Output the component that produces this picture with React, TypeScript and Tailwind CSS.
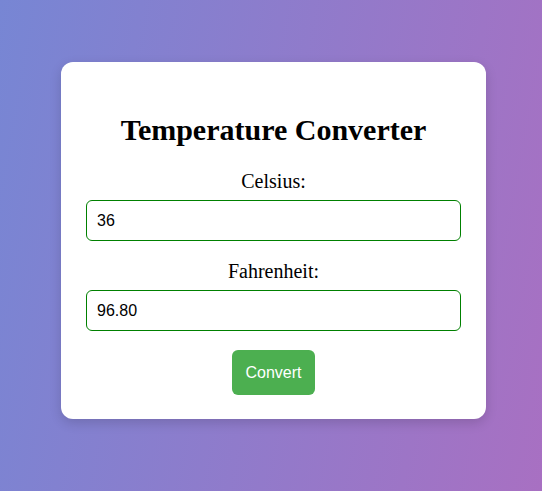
export default function App() {
  return (
    <div className="w-full h-[491px] bg-[linear-gradient(100deg,#7786d4,#a870c2)] pt-[62px] pl-[61px] overflow-hidden">
      <div className="w-[425px] bg-white rounded-[12px] shadow-[0_4px_12px_rgba(0,0,0,0.15)] pt-[51px] pb-[24px] px-[25px] flex flex-col items-center font-['Liberation_Serif',serif] text-black">
        <h1 className="text-[30px] leading-[34px] font-bold">Temperature Converter</h1>
        <label className="mt-[23px] text-[20px] leading-[23px]">Celsius:</label>
        <input
          readOnly
          value="36"
          className="mt-[7px] w-full h-[41px] border border-[#008000] rounded-[6px] px-[10px] text-[16px] font-['Liberation_Sans',sans-serif] outline-none text-black"
        />
        <label className="mt-[19px] text-[20px] leading-[23px]">Fahrenheit:</label>
        <input
          readOnly
          value="96.80"
          className="mt-[7px] w-full h-[41px] border border-[#008000] rounded-[6px] px-[10px] text-[16px] font-['Liberation_Sans',sans-serif] outline-none text-black"
        />
        <button className="mt-[19px] h-[45px] px-[13px] bg-[#4caf50] text-white rounded-[6px] text-[16px] font-['Liberation_Sans',sans-serif]">
          Convert
        </button>
      </div>
    </div>
  );
}
